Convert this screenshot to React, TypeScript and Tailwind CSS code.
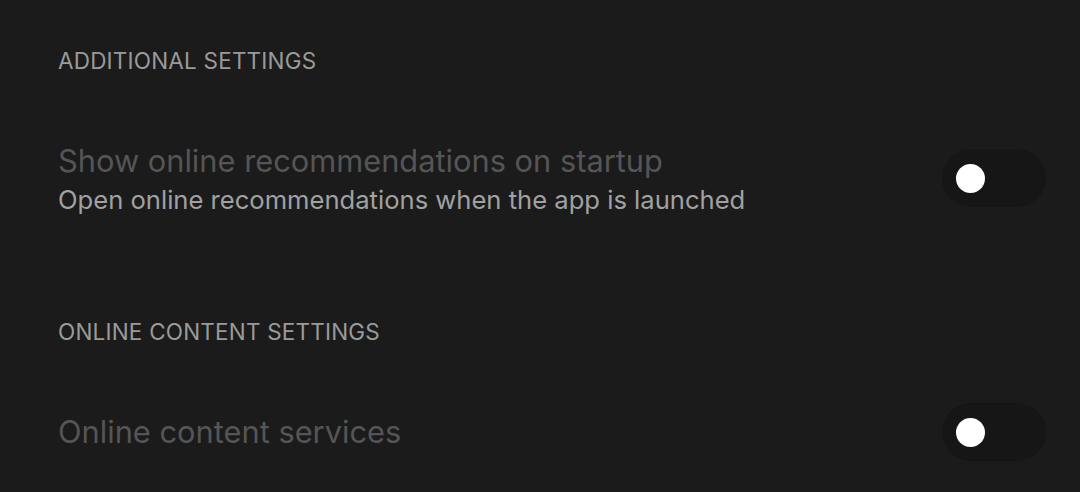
import { FC } from "react";

/* -------------------------------------------------------------------------- */
/*                               Toggle                                       */
/* -------------------------------------------------------------------------- */

const Toggle: FC<{ className?: string }> = ({ className = "" }) => (
  <div
    className={`w-[104px] h-[58px] rounded-full bg-[#161616] flex items-center pl-[14px] shrink-0 ${className}`}
  >
    <div className="w-[29px] h-[29px] rounded-full bg-white" />
  </div>
);

interface RowProps {
  title: string;
  subtitle?: string;
}

const SettingRow: FC<RowProps> = ({ title, subtitle }) => (
  <div
    className={`flex justify-between ${subtitle ? "items-start" : "items-center"}`}
  >
    <div className="flex flex-col">
      <span className="text-[30.8px] leading-[40px] text-[#555555]">{title}</span>
      {subtitle && (
        <span className="text-[25.6px] leading-[38px] text-[#a1a1a1]">
          {subtitle}
        </span>
      )}
    </div>
    <Toggle className={subtitle ? "mt-[8px]" : ""} />
  </div>
);

const SectionHeader: FC<{ label: string }> = ({ label }) => (
  <h2 className="text-[22.5px] leading-[28px] text-[#9a9a9a] tracking-[0.2px]">
    {label}
  </h2>
);

export default function App() {
  return (
    <div
      className="w-full h-screen bg-[#1b1b1b] pl-[58px] pr-[34px] pt-[47px] overflow-hidden"
      style={{ fontFamily: "Inter, 'Liberation Sans', sans-serif" }}
    >
      <SectionHeader label="ADDITIONAL SETTINGS" />
      <div className="mt-[66px]">
        <SettingRow
          title="Show online recommendations on startup"
          subtitle="Open online recommendations when the app is launched"
        />
      </div>
      <div className="mt-[99px]">
        <SectionHeader label="ONLINE CONTENT SETTINGS" />
      </div>
      <div className="mt-[57px]">
        <SettingRow title="Online content services" />
      </div>
    </div>
  );
}
